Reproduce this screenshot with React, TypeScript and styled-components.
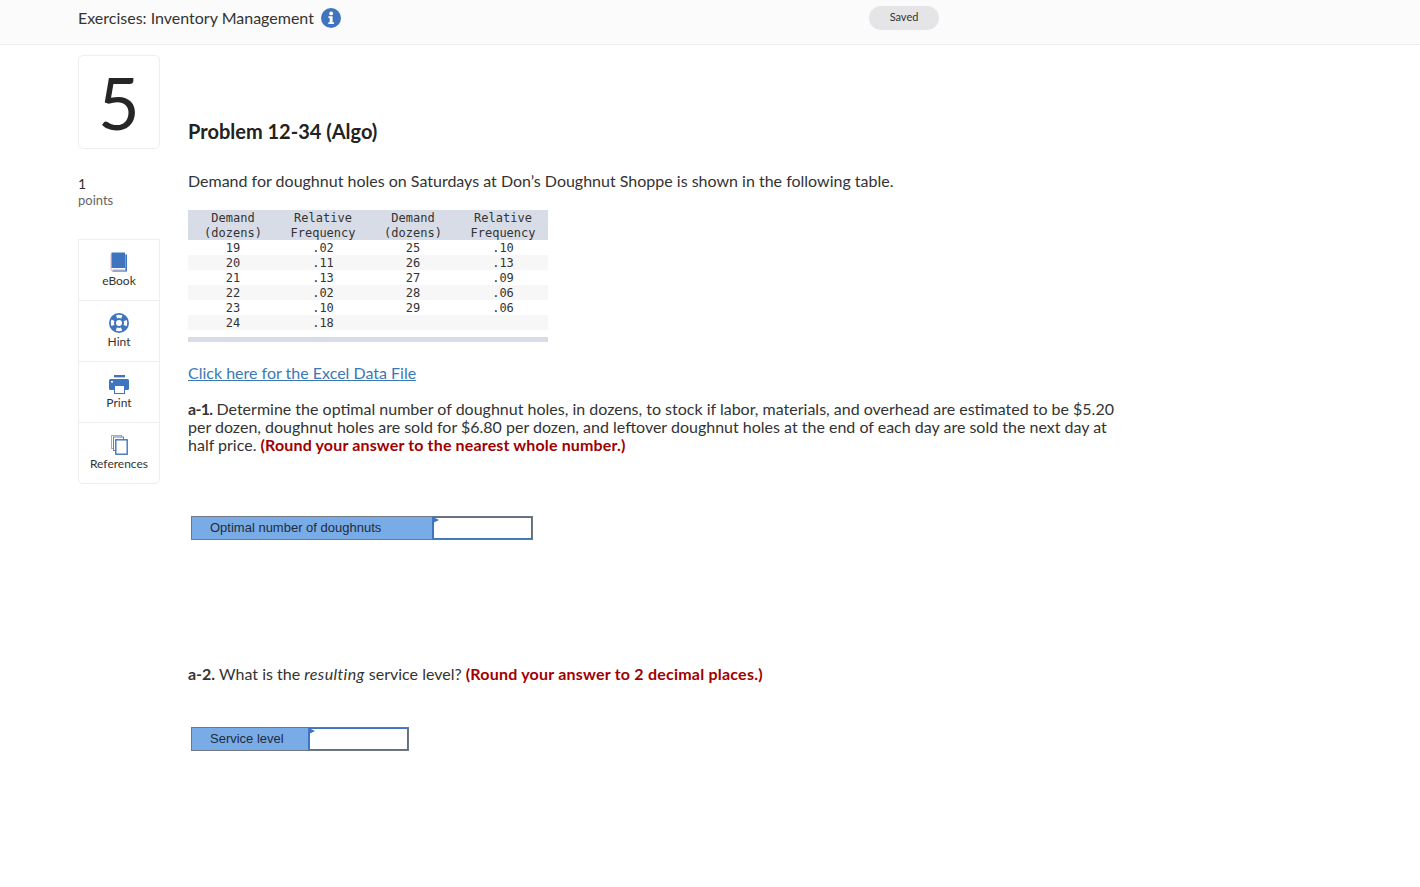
import styled, { createGlobalStyle } from "styled-components";

const GlobalStyle = createGlobalStyle`
  html, body {
    margin: 0;
    background: #fff;
    color: #2d2d2d;
    font-family: "Lato", "Open Sans", sans-serif;
  }
`;

const TopBar = styled.header`
  height: 44px;
  background: #fbfbfb;
  border-bottom: 1px solid #eeeeee;
  display: flex;
  align-items: flex-start;
  padding-left: 78px;
`;

const TopTitle = styled.div`
  font-size: 16px;
  color: #333;
  width: 791px;
  display: flex;
  align-items: center;
  gap: 7px;
  height: 36px;
`;

const TitleText = styled.span`
  padding-bottom: 2px;
`;

const SavedPill = styled.div`
  margin-top: 6px;
  width: 70px;
  height: 24px;
  box-sizing: border-box;
  padding-bottom: 3px;
  border-radius: 12px;
  background: #e5e4e7;
  color: #333;
  font-size: 11px;
  display: flex;
  align-items: center;
  justify-content: center;
`;

const Page = styled.div`
  display: flex;
  padding: 10px 0 0 78px;
`;

const Side = styled.aside`
  width: 82px;
  margin-right: 28px;
  flex: none;
`;

const NumberBox = styled.div`
  height: 92px;
  border: 1px solid #eeeeee;
  border-radius: 5px;
  display: flex;
  align-items: center;
  justify-content: center;
  font-size: 72px;
  color: #262626;
  line-height: 1;
`;

const Points = styled.div`
  margin-top: 27px;
  font-size: 14px;
  line-height: 16px;
  color: #333;
  small {
    display: block;
    font-size: 13px;
    color: #666;
  }
`;

const Tools = styled.nav`
  margin-top: 31px;
  border: 1px solid #eeeeee;
  border-radius: 0 0 5px 5px;
`;

const Tool = styled.div`
  height: 60px;
  display: flex;
  flex-direction: column;
  align-items: center;
  font-size: 12px;
  color: #333;
  & + & {
    border-top: 1px solid #eeeeee;
  }
  svg {
    margin-top: 12px;
    height: 20px;
    width: 20px;
    flex: none;
  }
  span {
    margin-top: 1px;
    line-height: 15px;
    white-space: nowrap;
  }
`;

const Main = styled.main`
  width: 930px;
`;

const Heading = styled.h1`
  margin: 64px 0 0;
  font-size: 20px;
  line-height: 24px;
  font-weight: 700;
  color: #222;
`;

const Para = styled.p<{ $top: number }>`
  margin: ${(p) => p.$top}px 0 0;
  font-size: 16px;
  line-height: 18px;
  color: #333;
`;

const PartLabel = styled.strong<{ $tight?: boolean }>`
  letter-spacing: ${(p) => (p.$tight ? "-0.7px" : "0")};
`;

const Warn = styled.strong<{ $wide?: boolean }>`
  color: #a00000;
  letter-spacing: ${(p) => (p.$wide ? "0.22px" : "0.15px")};
`;

const Stressed = styled.em`
  letter-spacing: 0.4px;
`;

const DataTable = styled.div`
  margin-top: 20px;
  width: 360px;
  font-family: "DejaVu Sans Mono", monospace;
  font-size: 12px;
  line-height: 15px;
  color: #333;
  border-bottom: 5px solid #d8dce6;
  padding-bottom: 7px;
`;

const Row = styled.div<{ $bg: string }>`
  display: grid;
  grid-template-columns: repeat(4, 90px);
  text-align: center;
  background: ${(p) => p.$bg};
  white-space: pre-line;
  min-height: 15px;
`;

const Cell = styled.div`
  padding-top: 1px;
  margin-bottom: -1px;
`;

const ExcelLink = styled.a`
  display: block;
  margin-top: 22px;
  font-size: 16px;
  line-height: 18px;
  color: #3a78b8;
  text-decoration: underline;
`;

const AnswerRow = styled.div<{ $top: number; $bottom?: number }>`
  display: flex;
  margin: ${(p) => p.$top}px 0 ${(p) => p.$bottom ?? 0}px 3px;
  height: 24px;
  font-family: "Liberation Sans", Arial, sans-serif;
  font-size: 13px;
`;

const AnswerLabel = styled.div<{ $w: number }>`
  width: ${(p) => p.$w}px;
  box-sizing: border-box;
  background: #79ace6;
  border: 1px solid #6f7782;
  border-right: 0;
  color: #222b3c;
  padding-left: 18px;
  line-height: 21px;
`;

const AnswerInput = styled.div<{ $w: number }>`
  width: ${(p) => p.$w}px;
  box-sizing: border-box;
  border: 1px solid #6f7782;
  border-left-color: #3f75be;
  box-shadow: inset 0 0 0 1px #3f75be;
  background: #fff;
  position: relative;
  &::before {
    content: "";
    position: absolute;
    left: 0;
    top: 0;
    border-left: 6px solid #3f75be;
    border-top: 3px solid transparent;
    border-bottom: 3px solid transparent;
  }
`;

const BLUE = "#3f75be";

const BookIcon = () => (
  <svg viewBox="0 0 20 20">
    <path d="M2 2.5h14.5V19H3.5C2.5 19 2 18 2 17z" fill="#fff" stroke="#dba3b8" strokeWidth="0.8" />
    <path d="M16.5 2.5h1.5V19.5H3.5v-1h13z" fill={BLUE} />
    <path d="M2.5 0.5h13.5v15.5H2.5z" fill={BLUE} />
    <path d="M3.5 16.8h12v1h-12z" fill="#c9cfe2" />
  </svg>
);

const LifeRingIcon = () => (
  <svg viewBox="0 0 20 20">
    <circle cx="10" cy="10" r="10" fill={BLUE} />
    <circle cx="10" cy="10" r="6.6" fill="none" stroke="#fff" strokeWidth="3.2" strokeDasharray="5.4 4.97" strokeDashoffset="2.7" />
    <circle cx="10" cy="10" r="3" fill="#fff" />
  </svg>
);

const PrintIcon = () => (
  <svg viewBox="0 0 20 20">
    <rect x="5" y="1" width="11" height="2.4" fill={BLUE} />
    <rect x="0" y="5" width="20" height="11" rx="1.5" fill={BLUE} />
    <rect x="2" y="7" width="2" height="1.6" fill="#fff" />
    <rect x="5.5" y="11.5" width="10" height="8" fill="#fff" stroke={BLUE} strokeWidth="1" />
  </svg>
);

const CopyIcon = () => (
  <svg viewBox="0 0 20 20" fill="#fff">
    <rect x="2.5" y="0.5" width="10" height="13" stroke="#a9a4c8" />
    <rect x="4.5" y="2" width="10" height="13.5" stroke="#5f7fc0" />
    <rect x="6.8" y="4.8" width="11.4" height="14.4" stroke={BLUE} strokeWidth="1.4" />
  </svg>
);

const InfoIcon = () => (
  <svg width="20" height="20" viewBox="0 0 20 20">
    <circle cx="10" cy="10" r="10" fill={BLUE} />
    <circle cx="10.2" cy="5.4" r="1.9" fill="#fff" />
    <path d="M7.4 8.3h4.2v6h1.3v1.7H7.4v-1.7h1.3v-4.3H7.4z" fill="#fff" />
  </svg>
);

const head = ["Demand\n(dozens)", "Relative\nFrequency", "Demand\n(dozens)", "Relative\nFrequency"];
const rows = [
  ["19", ".02", "25", ".10"],
  ["20", ".11", "26", ".13"],
  ["21", ".13", "27", ".09"],
  ["22", ".02", "28", ".06"],
  ["23", ".10", "29", ".06"],
  ["24", ".18", "", ""],
];

function App() {
  return (
    <>
      <GlobalStyle />
      <TopBar>
        <TopTitle>
          <TitleText>Exercises: Inventory Management</TitleText> <InfoIcon />
        </TopTitle>
        <SavedPill>Saved</SavedPill>
      </TopBar>
      <Page>
        <Side>
          <NumberBox>5</NumberBox>
          <Points>
            1<small>points</small>
          </Points>
          <Tools>
            <Tool>
              <BookIcon />
              <span>eBook</span>
            </Tool>
            <Tool>
              <LifeRingIcon />
              <span>Hint</span>
            </Tool>
            <Tool>
              <PrintIcon />
              <span>Print</span>
            </Tool>
            <Tool>
              <CopyIcon />
              <span>References</span>
            </Tool>
          </Tools>
        </Side>
        <Main>
          <Heading>Problem 12-34 (Algo)</Heading>
          <Para $top={29}>
            Demand for doughnut holes on Saturdays at Don’s Doughnut Shoppe is shown in the following table.
          </Para>
          <DataTable>
            <Row $bg="#d8dce6">
              {head.map((h, i) => (
                <Cell key={i}>{h}</Cell>
              ))}
            </Row>
            {rows.map((r, i) => (
              <Row key={i} $bg={i % 2 ? "#f7f7f7" : "#fff"}>
                {r.map((c, j) => (
                  <Cell key={j}>{c}</Cell>
                ))}
              </Row>
            ))}
          </DataTable>
          <ExcelLink href="#">Click here for the Excel Data File</ExcelLink>
          <Para $top={18}>
            <PartLabel $tight>a-1.</PartLabel> Determine the optimal number of doughnut holes, in dozens, to stock if
            labor, materials, and overhead are estimated to be $5.20 per dozen, doughnut holes are sold for $6.80 per
            dozen, and leftover doughnut holes at the end of each day are sold the next day at half price.{" "}
            <Warn>(Round your answer to the nearest whole number.)</Warn>
          </Para>
          <AnswerRow $top={62}>
            <AnswerLabel $w={241}>Optimal number of doughnuts</AnswerLabel>
            <AnswerInput $w={101} />
          </AnswerRow>
          <Para $top={125}>
            <PartLabel>a-2.</PartLabel> What is the <Stressed>resulting</Stressed> service level?{" "}
            <Warn $wide>(Round your answer to 2 decimal places.)</Warn>
          </Para>
          <AnswerRow $top={44} $bottom={120}>
            <AnswerLabel $w={117}>Service level</AnswerLabel>
            <AnswerInput $w={101} />
          </AnswerRow>
        </Main>
      </Page>
    </>
  );
}

export default App;
